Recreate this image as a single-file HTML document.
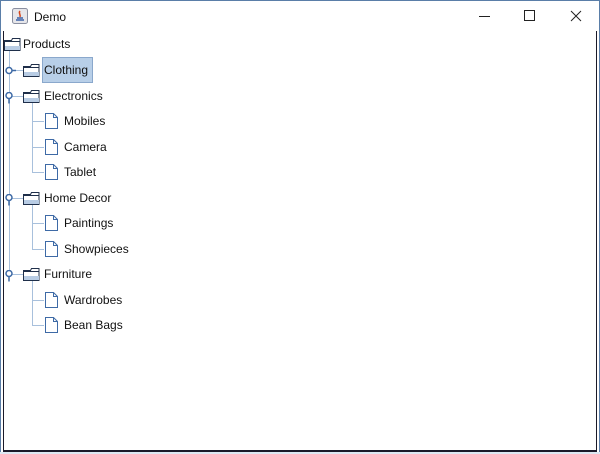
<!DOCTYPE html>
<html><head><meta charset="utf-8"><style>
body{margin:0;width:600px;height:454px;background:#dde8f3;position:relative;overflow:hidden;font-family:"Liberation Sans",sans-serif;font-size:12px;color:#111}
.win{position:absolute;left:0;top:0;width:598px;height:451px;border:1px solid #5a7ea8;border-bottom:none;background:#fff}
.content{position:absolute;left:3px;top:31px;width:592px;height:419px;border-left:1px solid #1a1a2a;border-right:1px solid #1a1a2a;border-bottom:2px solid #1a1a2a;background:#fff}
.t{position:absolute;white-space:nowrap;line-height:14px}
.v{position:absolute;width:1px;background:#a8c0dc}
.h{position:absolute;height:1px;background:#a8c0dc}
svg{position:absolute}
.sel{background:#b8cfe8;border:1px solid #8aa8cc;padding:5px 1px;width:47px}
</style></head><body>
<div class="win">
 <svg style="left:11px;top:7px" width="16" height="16"><rect x="0.5" y="0.5" width="15" height="15" rx="2" fill="#e6e6ea" stroke="#8a8fa0"/><path d="M4 12h8M5 10h6" stroke="#3b62a8" stroke-width="1.5"/><path d="M8 3c-2 2 1 3 0 6" stroke="#d8471b" stroke-width="1.5" fill="none"/></svg>
 <div class="t" style="left:33px;top:9px">Demo</div>
 <div style="position:absolute;left:478px;top:15px;width:11px;height:1px;background:#222"></div>
 <div style="position:absolute;left:523px;top:9px;width:9px;height:9px;border:1px solid #222"></div>
 <svg style="left:569px;top:9px" width="12" height="12"><path d="M1 1L11 11M11 1L1 11" stroke="#222" stroke-width="1"/></svg>
</div>
<div class="content"></div>
<div class="v" style="left:9px;top:51px;height:223px"></div>
<div class="v" style="left:32px;top:103px;height:69px"></div>
<div class="v" style="left:32px;top:205px;height:44px"></div>
<div class="v" style="left:32px;top:281px;height:44px"></div>
<div class="h" style="left:9px;top:70px;width:14px"></div>
<div class="h" style="left:9px;top:96px;width:14px"></div>
<div class="h" style="left:9px;top:198px;width:14px"></div>
<div class="h" style="left:9px;top:274px;width:14px"></div>
<div class="h" style="left:32px;top:121px;width:12px"></div>
<div class="h" style="left:32px;top:147px;width:12px"></div>
<div class="h" style="left:32px;top:172px;width:12px"></div>
<div class="h" style="left:32px;top:223px;width:12px"></div>
<div class="h" style="left:32px;top:249px;width:12px"></div>
<div class="h" style="left:32px;top:300px;width:12px"></div>
<div class="h" style="left:32px;top:325px;width:12px"></div>
<svg style="left:5px;top:66px" width="12" height="9"><circle cx="4" cy="4.5" r="3" fill="#fff" stroke="#3e6aa6" stroke-width="1.5"/><path d="M7 4.5h4" stroke="#3e6aa6" stroke-width="1.5"/></svg>
<svg style="left:5px;top:92px" width="9" height="12"><circle cx="4" cy="3.5" r="3" fill="#fff" stroke="#3e6aa6" stroke-width="1.5"/><path d="M4 6.5v5" stroke="#3e6aa6" stroke-width="1.5"/></svg>
<svg style="left:5px;top:194px" width="9" height="12"><circle cx="4" cy="3.5" r="3" fill="#fff" stroke="#3e6aa6" stroke-width="1.5"/><path d="M4 6.5v5" stroke="#3e6aa6" stroke-width="1.5"/></svg>
<svg style="left:5px;top:270px" width="9" height="12"><circle cx="4" cy="3.5" r="3" fill="#fff" stroke="#3e6aa6" stroke-width="1.5"/><path d="M4 6.5v5" stroke="#3e6aa6" stroke-width="1.5"/></svg>
<svg style="left:4px;top:38px" width="17" height="13"><path d="M0.5 2.5h7l1-2h7.5v12h-15.5z" fill="#fff" stroke="#1f2f4a"/><rect x="1" y="8" width="15" height="4" fill="#b8cce4"/><path d="M0.5 3.5h15.5" stroke="#1f2f4a"/></svg>
<svg style="left:23px;top:64px" width="17" height="13"><path d="M0.5 2.5h7l1-2h7.5v12h-15.5z" fill="#fff" stroke="#1f2f4a"/><rect x="1" y="8" width="15" height="4" fill="#b8cce4"/><path d="M0.5 3.5h15.5" stroke="#1f2f4a"/></svg>
<svg style="left:23px;top:90px" width="17" height="13"><path d="M0.5 2.5h7l1-2h7.5v12h-15.5z" fill="#fff" stroke="#1f2f4a"/><rect x="1" y="8" width="15" height="4" fill="#b8cce4"/><path d="M0.5 3.5h15.5" stroke="#1f2f4a"/></svg>
<svg style="left:23px;top:192px" width="17" height="13"><path d="M0.5 2.5h7l1-2h7.5v12h-15.5z" fill="#fff" stroke="#1f2f4a"/><rect x="1" y="8" width="15" height="4" fill="#b8cce4"/><path d="M0.5 3.5h15.5" stroke="#1f2f4a"/></svg>
<svg style="left:23px;top:268px" width="17" height="13"><path d="M0.5 2.5h7l1-2h7.5v12h-15.5z" fill="#fff" stroke="#1f2f4a"/><rect x="1" y="8" width="15" height="4" fill="#b8cce4"/><path d="M0.5 3.5h15.5" stroke="#1f2f4a"/></svg>
<svg style="left:45px;top:113px" width="13" height="16"><path d="M0.5 0.5h8l4 4v11h-12z" fill="#fff" stroke="#3e6aa6"/><path d="M8.5 0.5v4h4" fill="none" stroke="#3e6aa6"/></svg>
<svg style="left:45px;top:139px" width="13" height="16"><path d="M0.5 0.5h8l4 4v11h-12z" fill="#fff" stroke="#3e6aa6"/><path d="M8.5 0.5v4h4" fill="none" stroke="#3e6aa6"/></svg>
<svg style="left:45px;top:164px" width="13" height="16"><path d="M0.5 0.5h8l4 4v11h-12z" fill="#fff" stroke="#3e6aa6"/><path d="M8.5 0.5v4h4" fill="none" stroke="#3e6aa6"/></svg>
<svg style="left:45px;top:215px" width="13" height="16"><path d="M0.5 0.5h8l4 4v11h-12z" fill="#fff" stroke="#3e6aa6"/><path d="M8.5 0.5v4h4" fill="none" stroke="#3e6aa6"/></svg>
<svg style="left:45px;top:241px" width="13" height="16"><path d="M0.5 0.5h8l4 4v11h-12z" fill="#fff" stroke="#3e6aa6"/><path d="M8.5 0.5v4h4" fill="none" stroke="#3e6aa6"/></svg>
<svg style="left:45px;top:292px" width="13" height="16"><path d="M0.5 0.5h8l4 4v11h-12z" fill="#fff" stroke="#3e6aa6"/><path d="M8.5 0.5v4h4" fill="none" stroke="#3e6aa6"/></svg>
<svg style="left:45px;top:317px" width="13" height="16"><path d="M0.5 0.5h8l4 4v11h-12z" fill="#fff" stroke="#3e6aa6"/><path d="M8.5 0.5v4h4" fill="none" stroke="#3e6aa6"/></svg>
<div class="t" style="left:23px;top:37px">Products</div>
<div class="t sel" style="left:42px;top:57px">Clothing</div>
<div class="t" style="left:44px;top:89px">Electronics</div>
<div class="t" style="left:64px;top:114px">Mobiles</div>
<div class="t" style="left:64px;top:140px">Camera</div>
<div class="t" style="left:64px;top:165px">Tablet</div>
<div class="t" style="left:44px;top:191px">Home Decor</div>
<div class="t" style="left:64px;top:216px">Paintings</div>
<div class="t" style="left:64px;top:242px">Showpieces</div>
<div class="t" style="left:44px;top:267px">Furniture</div>
<div class="t" style="left:64px;top:293px">Wardrobes</div>
<div class="t" style="left:64px;top:318px">Bean Bags</div>
</body></html>
